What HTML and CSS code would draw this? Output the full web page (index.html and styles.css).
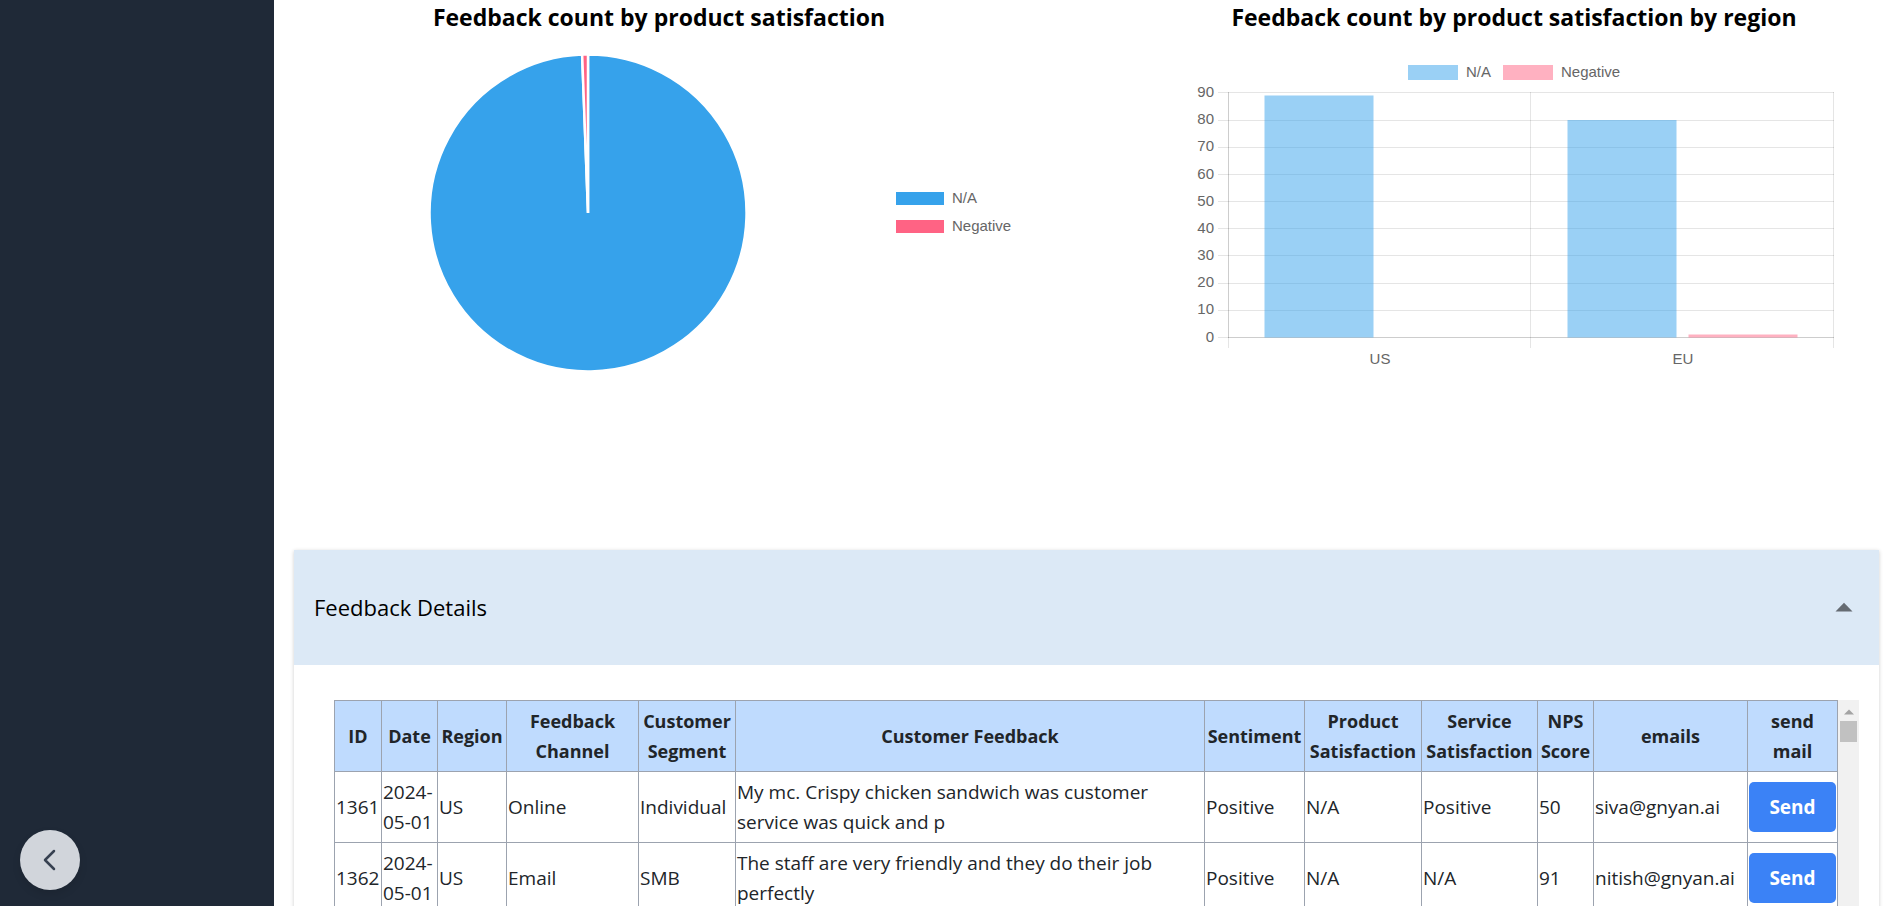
FILE: index.html
```html
<!DOCTYPE html>
<html lang="en">
<head>
<meta charset="utf-8">
<title>Feedback dashboard</title>
<link rel="stylesheet" href="styles.css">
</head>
<body>
<div class="app">
  <aside class="sidebar">
    <button class="collapse" type="button" aria-label="Collapse sidebar">
      <svg width="16" height="24" viewBox="0 0 16 24" fill="none" stroke="#374151" stroke-width="2.5" stroke-linecap="round" stroke-linejoin="round"><path d="M12 3 3 12l9 9"/></svg>
    </button>
  </aside>
  <main class="main">
    <section class="charts">
      <div class="chart">
        <h2 class="chart-title">Feedback count by product satisfaction</h2>
        <div class="pie-row">
          <div class="pie-area">
            <svg class="pie" viewBox="0 0 320 320" stroke="#fff" stroke-width="2.5" stroke-linejoin="bevel">
              <path fill="#36a2eb" d="M160 160V1.5A158.5 158.5 0 1 1 154.14 1.61Z"/>
              <path fill="#ff6384" d="M160 160 154.14 1.61A158.5 158.5 0 0 1 160 1.5Z"/>
            </svg>
          </div>
          <ul class="legend">
            <li><span class="swatch swatch-na"></span>N/A</li>
            <li><span class="swatch swatch-neg"></span>Negative</li>
          </ul>
        </div>
      </div>
      <div class="chart">
        <h2 class="chart-title">Feedback count by product satisfaction by region</h2>
        <svg class="bars" viewBox="0 0 640 330">
          <path class="grid" d="M24 52.5H640M24 80.5H640M24 107.500H640M24 134.500H640M24 161.500H640M24 188.500H640M24 215.500H640M24 243.500H640M24 270.500H640M24 297.500H640M34.500 52V308M336.500 52V308M639.500 52V308"/>
          <path class="grid" d="M34.500 52V298M34 297.500H640"/>
          <g class="bar-na"><rect x="214" y="25" width="50" height="15"/><rect x="70.5" y="55.5" width="109" height="242"/><rect x="373.5" y="80" width="109" height="217.500"/></g>
          <g class="bar-neg"><rect x="309" y="25" width="50" height="15"/><rect x="494.5" y="294.500" width="109" height="3"/></g>
          <g class="tick">
            <text x="272" y="37">N/A</text><text x="367" y="37">Negative</text>
            <g text-anchor="end">
              <text x="20" y="57">90</text><text x="20" y="84">80</text><text x="20" y="111">70</text><text x="20" y="139">60</text><text x="20" y="166">50</text><text x="20" y="193">40</text><text x="20" y="220">30</text><text x="20" y="247">20</text><text x="20" y="274">10</text><text x="20" y="302">0</text>
            </g>
            <g text-anchor="middle"><text x="186" y="324">US</text><text x="489" y="324">EU</text></g>
          </g>
        </svg>
      </div>
    </section>
    <section class="panel">
      <button class="panel-head" type="button" aria-expanded="true">
        <span>Feedback Details</span>
        <svg width="18" height="10" viewBox="0 0 18 10"><path fill="#656b72" d="M.5 9.500 9 .8l8.500 8.700z"/></svg>
      </button>
      <div class="panel-body">
        <table class="feedback">
          <colgroup>
            <col class="c-id"><col class="c-date"><col class="c-region"><col class="c-channel"><col class="c-segment"><col><col class="c-sentiment"><col class="c-product"><col class="c-service"><col class="c-nps"><col class="c-mail"><col class="c-send">
          </colgroup>
          <thead>
            <tr><th>ID</th><th>Date</th><th>Region</th><th>Feedback<br>Channel</th><th>Customer Segment</th><th>Customer Feedback</th><th>Sentiment</th><th>Product Satisfaction</th><th>Service Satisfaction</th><th>NPS Score</th><th>emails</th><th>send<br>mail</th></tr>
          </thead>
          <tbody>
            <tr><td>1361</td><td>2024-05-01</td><td>US</td><td>Online</td><td>Individual</td><td>My mc. Crispy chicken sandwich was customer service was quick and p</td><td>Positive</td><td>N/A</td><td>Positive</td><td>50</td><td>siva@gnyan.ai</td><td><button class="send" type="button">Send</button></td></tr>
            <tr><td>1362</td><td>2024-05-01</td><td>US</td><td>Email</td><td>SMB</td><td>The staff are very friendly and they do their job perfectly</td><td>Positive</td><td>N/A</td><td>N/A</td><td>91</td><td>nitish@gnyan.ai</td><td><button class="send" type="button">Send</button></td></tr>
          </tbody>
        </table>
        <div class="scrollbar">
          <svg width="10" height="6" viewBox="0 0 10 6"><path fill="#a3a3a3" d="M0 5.500 5 .5l5 5z"/></svg>
          <div class="thumb"></div>
        </div>
      </div>
    </section>
  </main>
</div>
</body>
</html>
```
FILE: styles.css
```css
* { box-sizing: border-box; }
body {
  margin: 0;
  overflow: hidden;
  font-family: "Segoe UI", "Open Sans", "Noto Sans", sans-serif;
  font-size: 19px;
  line-height: 30px;
  color: #212529;
  background: #fff;
}
button { font: inherit; border: 0; cursor: pointer; }
.app { display: flex; height: 100vh; }
.sidebar {
  flex: 0 0 274px;
  display: flex;
  flex-direction: column;
  justify-content: flex-end;
  padding: 16px 20px;
  background: #1f2937;
}
.collapse {
  display: flex;
  align-items: center;
  justify-content: center;
  width: 60px;
  height: 60px;
  padding: 0;
  border-radius: 50%;
  background: #d1d5db;
  box-shadow: 0 4px 8px rgba(0, 0, 0, .1);
}
.main { flex: 1; min-width: 0; overflow: hidden; padding: 0 17px 0 20px; }
.charts {
  display: grid;
  grid-template-columns: 1fr 1fr;
  column-gap: 125px;
  height: 550px;
}
.chart { display: flex; flex-direction: column; align-items: center; }
.chart-title {
  margin: 0;
  font-size: 23px;
  line-height: 34px;
  font-weight: 700;
  color: #000;
  white-space: nowrap;
}
.pie-row { display: flex; align-items: center; width: 100%; padding-top: 19px; }
.pie-area { flex: 1; display: flex; justify-content: center; }
.pie { width: 320px; height: 320px; }
.legend {
  width: 142px;
  margin: 0;
  padding: 0 0 2px 14px;
  list-style: none;
  font: 15px/28px "Liberation Sans", Arial, sans-serif;
  color: #666;
}
.legend li { display: flex; align-items: center; gap: 8px; }
.swatch { width: 48px; height: 13px; }
.swatch-na { background: #36a2eb; }
.swatch-neg { background: #ff6384; }
.bars { width: 88%; max-width: 640px; margin-top: 6px; }
.bar-na { fill: #36a2eb; fill-opacity: .5; }
.bar-neg { fill: #ff6384; fill-opacity: .5; }
.grid { fill: none; stroke: rgba(0, 0, 0, .1); }
.tick { font: 15px "Liberation Sans", Arial, sans-serif; fill: #666; }
.panel {
  height: 800px;
  background: #fff;
  box-shadow: 0 1px 4px rgba(0, 0, 0, .2);
}
.panel-head {
  display: flex;
  align-items: center;
  justify-content: space-between;
  width: 100%;
  height: 115px;
  padding: 0 26px 2px 20px;
  background: #dce9f6;
  color: #000;
  font-size: 22px;
}
.panel-body { display: flex; align-items: stretch; height: 600px; padding: 35px 20px 0 40px; }
.feedback {
  flex: 1;
  min-width: 0;
  align-self: flex-start;
  table-layout: fixed;
  border-collapse: collapse;
}
.feedback th, .feedback td {
  height: 71px;
  padding: 0 1px;
  border: 1px solid #9ca3af;
}
.feedback th { background: #bfdbfe; font-weight: 700; font-size: 18px; }
.feedback td { text-align: left; }
.c-id { width: 47px; }
.c-date { width: 56px; }
.c-region { width: 69px; }
.c-channel { width: 132px; }
.c-segment { width: 97px; }
.c-sentiment { width: 100px; }
.c-product { width: 117px; }
.c-service { width: 116px; }
.c-nps { width: 56px; }
.c-mail { width: 154px; }
.c-send { width: 90px; }
.send {
  display: block;
  width: 100%;
  height: 50px;
  padding: 0;
  border-radius: 5px;
  background: #3b82f6;
  color: #fff;
  font-weight: 700;
}
.scrollbar {
  flex: 0 0 21px;
  display: flex;
  flex-direction: column;
  align-items: center;
  gap: 6px;
  padding-top: 9px;
  background: #f1f1f1;
}
.thumb { width: 17px; height: 21px; background: #c1c1c1; }
```
